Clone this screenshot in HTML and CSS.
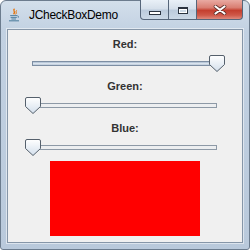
FILE: index.html
```html
<!DOCTYPE html>
<html lang="en">
<head>
    <meta charset="UTF-8">
    <title>JCheckBoxDemo</title>
    <link rel="stylesheet" href="styles.css">
</head>
<body>
    <div class="window">
        <div class="titlebar">
            <svg class="app-icon" width="12" height="14" viewBox="0 0 12 14">
                <path d="M6.5 0.8 C4.2 2.6 8.2 3.6 5.6 6.2" fill="none" stroke="#e76f00" stroke-width="1.3"/>
                <path d="M8.6 2.4 C7.2 3.8 9.2 4.6 7.6 6.4" fill="none" stroke="#e76f00" stroke-width="1"/>
                <path d="M2.2 7.6 H9.2 M2.6 9.4 H8.8 M3.4 11 H8" fill="none" stroke="#5382a1" stroke-width="1"/>
                <path d="M9.2 7.8 Q11.4 8 10.2 9.8" fill="none" stroke="#5382a1" stroke-width="0.9"/>
                <path d="M1 12.8 H11" fill="none" stroke="#5382a1" stroke-width="1.1"/>
            </svg>
            <span class="title">JCheckBoxDemo</span>
            <div class="controls">
                <div class="btn min"><span class="glyph-min"></span></div>
                <div class="btn max"><span class="glyph-max"></span></div>
                <div class="btn close">
                    <svg width="14" height="10" viewBox="0 0 14 10">
                        <path d="M2.5 1.5 L11.5 8.5 M11.5 1.5 L2.5 8.5" stroke="#5a2a24" stroke-width="3.6" stroke-linecap="round"/>
                        <path d="M2.5 1.5 L11.5 8.5 M11.5 1.5 L2.5 8.5" stroke="#ffffff" stroke-width="2.2" stroke-linecap="round"/>
                    </svg>
                </div>
            </div>
        </div>
        <div class="content">
            <div class="field">
                <div class="label">Red:</div>
                <div class="slider">
                    <div class="track filled"></div>
                    <svg class="thumb at-max" width="16" height="17" viewBox="0 0 16 17">
                        <defs>
                            <linearGradient id="tg1" x1="0" y1="0" x2="0" y2="1">
                                <stop offset="0" stop-color="#ffffff"/>
                                <stop offset="1" stop-color="#d3dfec"/>
                            </linearGradient>
                        </defs>
                        <path d="M2 0.5 H14 Q15.5 0.5 15.5 2 V9.5 L8 16.5 L0.5 9.5 V2 Q0.5 0.5 2 0.5 Z" fill="url(#tg1)" stroke="#55606c"/>
                    </svg>
                </div>
            </div>
            <div class="field">
                <div class="label">Green:</div>
                <div class="slider">
                    <div class="track"></div>
                    <svg class="thumb at-min" width="16" height="17" viewBox="0 0 16 17">
                        <path d="M2 0.5 H14 Q15.5 0.5 15.5 2 V9.5 L8 16.5 L0.5 9.5 V2 Q0.5 0.5 2 0.5 Z" fill="url(#tg1)" stroke="#55606c"/>
                    </svg>
                </div>
            </div>
            <div class="field">
                <div class="label">Blue:</div>
                <div class="slider">
                    <div class="track"></div>
                    <svg class="thumb at-min" width="16" height="17" viewBox="0 0 16 17">
                        <path d="M2 0.5 H14 Q15.5 0.5 15.5 2 V9.5 L8 16.5 L0.5 9.5 V2 Q0.5 0.5 2 0.5 Z" fill="url(#tg1)" stroke="#55606c"/>
                    </svg>
                </div>
            </div>
            <div class="swatch" style="background-color: rgb(255, 0, 0);"></div>
        </div>
    </div>
</body>
</html>
```

FILE: styles.css
```css
body {
    margin: 0;
    background: #ffffff;
    font-family: "Liberation Sans", Arial, sans-serif;
}
.window {
    width: 250px;
    height: 250px;
    box-sizing: border-box;
    border: 1px solid #6c7c8e;
    border-radius: 6px 6px 3px 3px;
    background: linear-gradient(#d3dfeb, #c2d1e2 30px, #b9c9db);
    display: flex;
    flex-direction: column;
}
.titlebar {
    height: 28px;
    display: flex;
    align-items: flex-start;
    padding-left: 7px;
}
.app-icon {
    margin-top: 7px;
}
.title {
    margin-top: 7px;
    margin-left: 9px;
    font-size: 12px;
    line-height: 14px;
    letter-spacing: -0.3px;
    color: #000000;
}
.controls {
    margin-left: auto;
    margin-right: 6px;
    margin-top: -1px;
    display: flex;
}
.btn {
    height: 20px;
    box-sizing: border-box;
    border: 1px solid #56667a;
    border-top: none;
    display: flex;
    justify-content: center;
    align-items: flex-start;
}
.min {
    width: 29px;
    padding-top: 11px;
    border-bottom-left-radius: 4px;
    background: linear-gradient(#e9f0f7, #d6e0eb 45%, #bccbdc 55%, #cbd8e6);
}
.max {
    width: 28px;
    padding-top: 7px;
    border-left: none;
    background: linear-gradient(#e9f0f7, #d6e0eb 45%, #bccbdc 55%, #cbd8e6);
}
.close {
    width: 46px;
    padding-top: 5px;
    border-left: none;
    border-bottom-right-radius: 4px;
    background: linear-gradient(#e9aaa2, #d97e72 40%, #c43f2f 55%, #cf5848 80%, #de8a7d);
}
.glyph-min {
    width: 10px;
    height: 2px;
    border: 1px solid #2b3440;
    background: #ffffff;
}
.glyph-max {
    width: 8px;
    height: 4px;
    border: 1px solid #2b3440;
    border-top-width: 2px;
    background: #cfdbe8;
    box-shadow: inset 0 0 0 1px #ffffff;
}
.content {
    flex: 1;
    margin: 0 6px 6px 6px;
    border: 1px solid #8696a8;
    background: #f0f0f0;
    box-shadow: 0 0 0 1px rgba(255, 255, 255, 0.5);
    display: flex;
    flex-direction: column;
    align-items: center;
    padding-top: 7px;
}
.field {
    display: flex;
    flex-direction: column;
    align-items: center;
}
.field + .field {
    margin-top: 7px;
}
.label {
    font-size: 11px;
    line-height: 14px;
    font-weight: bold;
    color: #333333;
    margin-bottom: 4px;
}
.slider {
    position: relative;
    width: 200px;
    height: 17px;
}
.track {
    margin: 6px 8px 0 7px;
    height: 5px;
    box-sizing: border-box;
    border: 1px solid #8d99a6;
    background: #eceef0;
}
.track.filled {
    border-color: #7d8ea3;
    background: linear-gradient(#a9bbcf, #dfe7f0 55%, #b8c7d8);
}
.thumb {
    position: absolute;
    top: 0;
}
.thumb.at-max {
    right: 0;
}
.thumb.at-min {
    left: 0;
}
.swatch {
    margin-top: 5px;
    width: 150px;
    height: 75px;
}
```
